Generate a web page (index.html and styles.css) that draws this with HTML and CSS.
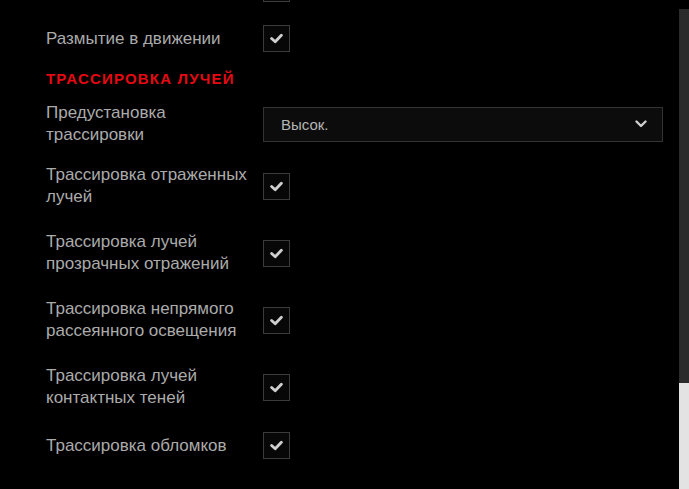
FILE: index.html
```html
<!DOCTYPE html>
<html lang="ru">
<head>
    <meta charset="UTF-8">
    <title>Настройки графики</title>
    <link rel="stylesheet" href="styles.css">
</head>

<body>
    <div class="page">
        <div class="settings">
            <div class="row">
                <span class="label"></span>
                <span class="check on"><svg viewBox="0 0 12 10"><polyline points="1.5,5 4.8,8 10.5,2"/></svg></span>
            </div>
            <div class="row">
                <span class="label">Размытие в движении</span>
                <span class="check on"><svg viewBox="0 0 12 10"><polyline points="1.5,5 4.8,8 10.5,2"/></svg></span>
            </div>

            <h2 class="section-title">Трассировка лучей</h2>

            <div class="row preset">
                <span class="label">Предустановка трассировки</span>
                <div class="select">
                    <span>Высок.</span>
                    <svg viewBox="0 0 12 8"><polyline points="1.5,1.5 6,6 10.5,1.5"/></svg>
                </div>
            </div>
            <div class="row">
                <span class="label">Трассировка отраженных лучей</span>
                <span class="check on"><svg viewBox="0 0 12 10"><polyline points="1.5,5 4.8,8 10.5,2"/></svg></span>
            </div>
            <div class="row">
                <span class="label">Трассировка лучей прозрачных отражений</span>
                <span class="check on"><svg viewBox="0 0 12 10"><polyline points="1.5,5 4.8,8 10.5,2"/></svg></span>
            </div>
            <div class="row">
                <span class="label">Трассировка непрямого рассеянного освещения</span>
                <span class="check on"><svg viewBox="0 0 12 10"><polyline points="1.5,5 4.8,8 10.5,2"/></svg></span>
            </div>
            <div class="row">
                <span class="label">Трассировка лучей контактных теней</span>
                <span class="check on"><svg viewBox="0 0 12 10"><polyline points="1.5,5 4.8,8 10.5,2"/></svg></span>
            </div>
            <div class="row">
                <span class="label">Трассировка обломков</span>
                <span class="check on"><svg viewBox="0 0 12 10"><polyline points="1.5,5 4.8,8 10.5,2"/></svg></span>
            </div>
        </div>

        <div class="scrollbar">
            <div class="track"></div>
            <div class="thumb"></div>
        </div>
    </div>
</body>
</html>
```

FILE: styles.css
```css
html, body {
    height: 100%;
}
body {
    margin: 0;
    background-color: #000;
    font-family: 'Liberation Sans', Arial, sans-serif;
    overflow: hidden;
}
.page {
    display: flex;
    height: 100%;
}
.settings {
    flex: 1;
    padding: 0 16px 0 46px;
    margin-top: -25px;
}
.row {
    display: flex;
    align-items: center;
    margin-bottom: 23px;
}
.row.preset {
    margin-bottom: 18px;
}
.label {
    width: 205px;
    padding-right: 12px;
    flex-shrink: 0;
    color: #ababab;
    font-size: 17px;
    line-height: 22px;
}
.check {
    width: 25px;
    height: 25px;
    border: 1px solid #3b3b3b;
    background-color: #070707;
    display: flex;
    align-items: center;
    justify-content: center;
}
.check svg {
    width: 13px;
    height: 11px;
    fill: none;
    stroke: #cfcfcf;
    stroke-width: 2.6;
    stroke-linecap: round;
    stroke-linejoin: round;
}
.section-title {
    margin: -9px 0 10px;
    color: #e50914;
    font-size: 15px;
    font-weight: bold;
    letter-spacing: 1.2px;
    line-height: 26px;
    text-transform: uppercase;
}
.select {
    flex: 1;
    height: 33px;
    border: 1px solid #333;
    background-color: #0c0c0c;
    display: flex;
    align-items: center;
    justify-content: space-between;
    padding: 0 15px 0 17px;
    color: #b5b5b5;
    font-size: 15px;
}
.select svg {
    width: 12px;
    height: 8px;
    fill: none;
    stroke: #cfcfcf;
    stroke-width: 2.4;
    stroke-linecap: round;
    stroke-linejoin: round;
}
.scrollbar {
    width: 10px;
    display: flex;
    flex-direction: column;
    padding-top: 9px;
}
.scrollbar .track {
    flex: 1;
    background-color: #2b2b2b;
}
.scrollbar .thumb {
    height: 106px;
    background-color: #e3e3e3;
}
```
